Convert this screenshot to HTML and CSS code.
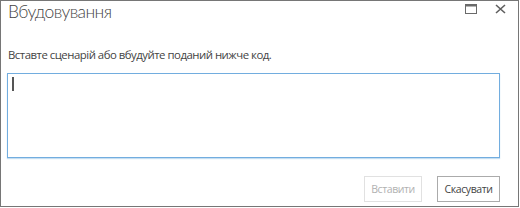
FILE: index.html
```html
<!DOCTYPE html>
<html>
  <head>
    <meta charset="utf-8">
    <link rel="stylesheet" href="styles.css">
  </head>
  <body>
    <div class="dialog">
      <div class="dialog-header">
        <div class="dialog-title">Вбудовування</div>
        <div class="dialog-controls">
          <span class="ctrl">
            <svg width="12" height="10" viewBox="0 0 12 10">
              <rect x="0.5" y="0.5" width="11" height="9" fill="none" stroke="#6a6a6a" stroke-width="1"/>
              <rect x="0.5" y="0.5" width="11" height="2" fill="#6a6a6a"/>
            </svg>
          </span>
          <span class="ctrl">
            <svg width="11" height="10" viewBox="0 0 11 10">
              <path d="M1 1 L10 9 M10 1 L1 9" stroke="#5f5f5f" stroke-width="1.6"/>
            </svg>
          </span>
        </div>
      </div>
      <div class="dialog-body">
        <p class="hint">Вставте сценарій або вбудуйте поданий нижче код.</p>
        <div class="code-box"><span class="caret"></span></div>
      </div>
      <div class="dialog-footer">
        <button class="btn btn-insert" disabled>Вставити</button>
        <button class="btn btn-cancel">Скасувати</button>
      </div>
    </div>
  </body>
</html>
```

FILE: styles.css
```css
body {
  margin: 0;
  font-family: "Segoe UI", "Open Sans", "Noto Sans", sans-serif;
  color: #444;
}
.dialog {
  box-sizing: border-box;
  width: 519px;
  height: 207px;
  border: 1px solid #767676;
  background: #fff;
  display: flex;
  flex-direction: column;
}
.dialog-header {
  display: flex;
  justify-content: space-between;
  align-items: flex-start;
  height: 36px;
}
.dialog-title {
  font-family: "Segoe UI", Lato, "Open Sans", sans-serif;
  font-size: 17.5px;
  font-weight: 300;
  color: #444;
  padding: 0 0 0 7px;
  line-height: 22px;
  letter-spacing: -0.6px;
}
.dialog-controls {
  display: flex;
  gap: 18px;
  padding: 3px 12px 0 0;
}
.ctrl {
  display: flex;
}
.dialog-body {
  padding: 0 18px 0 6px;
}
.hint {
  margin: 9px 0 0 1px;
  font-size: 11.4px;
  line-height: 18px;
  letter-spacing: -0.5px;
  color: #444;
}
.code-box {
  box-sizing: border-box;
  height: 85px;
  margin-top: 9px;
  border: 1px solid #72addf;
  box-shadow: 0 1px 1px #c5def2;
  padding: 3px 4px;
}
.caret {
  display: block;
  width: 2px;
  height: 14px;
  background: #555;
}
.dialog-footer {
  display: flex;
  justify-content: flex-end;
  gap: 15px;
  padding: 18px 18px 0 0;
}
.btn {
  box-sizing: border-box;
  height: 26px;
  padding: 0;
  background: #fff;
  border: 1px solid #ababab;
  font-family: "Segoe UI", "Open Sans", "Noto Sans", sans-serif;
  font-size: 10.5px;
  letter-spacing: -0.4px;
  color: #444;
}
.btn-insert {
  width: 58px;
}
.btn-cancel {
  width: 63px;
}
.btn:disabled {
  border-color: #e1e1e1;
  color: #b1b1b1;
}
```
